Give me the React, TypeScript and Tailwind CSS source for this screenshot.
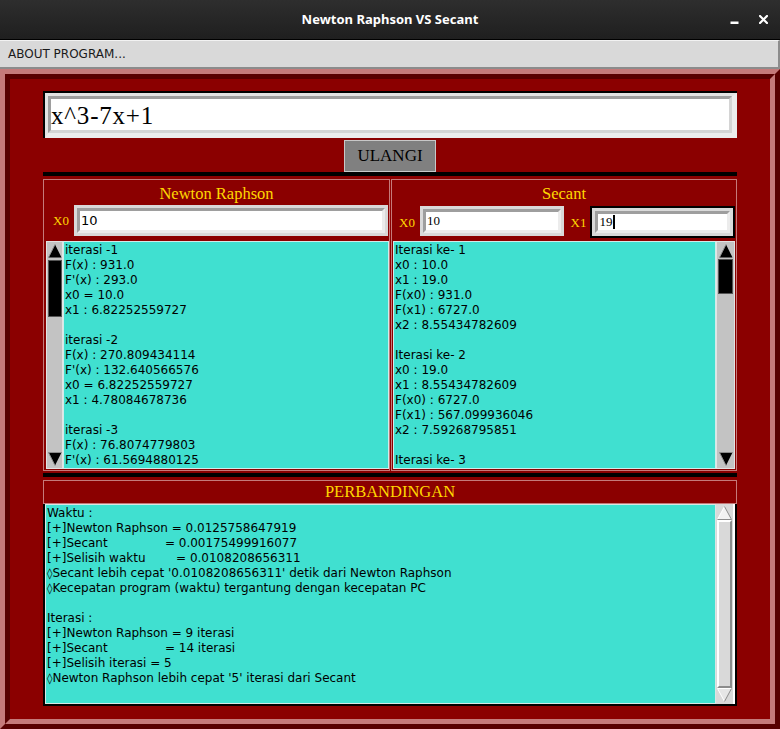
import type { ReactNode } from 'react'

const nrLines = [
  'iterasi -1',
  'F(x) : 931.0',
  "F'(x) : 293.0",
  'x0 = 10.0',
  'x1 : 6.82252559727',
  '',
  'iterasi -2',
  'F(x) : 270.809434114',
  "F'(x) : 132.640566576",
  'x0 = 6.82252559727',
  'x1 : 4.78084678736',
  '',
  'iterasi -3',
  'F(x) : 76.8074779803',
  "F'(x) : 61.5694880125",
]

const secLines = [
  'Iterasi ke- 1',
  'x0 : 10.0',
  'x1 : 19.0',
  'F(x0) : 931.0',
  'F(x1) : 6727.0',
  'x2 : 8.55434782609',
  '',
  'Iterasi ke- 2',
  'x0 : 19.0',
  'x1 : 8.55434782609',
  'F(x0) : 6727.0',
  'F(x1) : 567.099936046',
  'x2 : 7.59268795851',
  '',
  'Iterasi ke- 3',
]

const secPad = ' '.repeat(15)
const waktuPad = ' '.repeat(8)

const cmpLines = [
  'Waktu :',
  '[+]Newton Raphson = 0.0125758647919',
  `[+]Secant${secPad}= 0.00175499916077`,
  `[+]Selisih waktu${waktuPad}= 0.0108208656311`,
  "◊Secant lebih cepat '0.0108208656311' detik dari Newton Raphson",
  '◊Kecepatan program (waktu) tergantung dengan kecepatan PC',
  '',
  'Iterasi :',
  '[+]Newton Raphson = 9 iterasi',
  `[+]Secant${secPad}= 14 iterasi`,
  '[+]Selisih iterasi = 5',
  "◊Newton Raphson lebih cepat '5' iterasi dari Secant",
]

function Lines({ lines }: { lines: string[] }) {
  return (
    <>
      {lines.map((l, i) => (
        <div key={i} className="h-[15px] whitespace-pre leading-[15px]">
          {l.startsWith('◊') ? (
            <>
              <span className="text-[11px]">◊</span>
              {l.slice(1)}
            </>
          ) : (
            l
          )}
        </div>
      ))}
    </>
  )
}

function DarkArrow({ down }: { down?: boolean }) {
  if (down) {
    return (
      <svg width="14" height="14" viewBox="0 0 14 14">
        <polygon points="0.5,0.5 13.5,0.5 7,13.5" fill="#000" />
        <polyline points="7,13.5 0.5,0.5 13.5,0.5" stroke="#8c8c8c" fill="none" />
      </svg>
    )
  }
  return (
    <svg width="14" height="14" viewBox="0 0 14 14">
      <polygon points="7,0.5 13.5,13.5 0.5,13.5" fill="#000" />
      <polyline points="0.5,13.5 7,0.5" stroke="#8c8c8c" fill="none" />
    </svg>
  )
}

function LightArrow({ down }: { down?: boolean }) {
  if (down) {
    return (
      <svg width="15" height="14" viewBox="0 0 15 14">
        <polygon points="0.5,0.5 14.5,0.5 7.5,13.5" fill="#e6e6e6" />
        <polyline points="7.5,13.5 0.5,0.5 14.5,0.5" stroke="#ffffff" fill="none" />
        <polyline points="14.5,0.5 7.5,13.5" stroke="#8c8c8c" fill="none" />
      </svg>
    )
  }
  return (
    <svg width="15" height="14" viewBox="0 0 15 14">
      <polygon points="7.5,0.5 14.5,13.5 0.5,13.5" fill="#f2f2f2" />
      <polyline points="0.5,13.5 7.5,0.5" stroke="#ffffff" fill="none" />
      <polyline points="7.5,0.5 14.5,13.5 0.5,13.5" stroke="#8c8c8c" fill="none" />
    </svg>
  )
}

function DarkScroll({ className, thumb }: { className: string; thumb: string }) {
  return (
    <div className={`flex shrink-0 flex-col items-center border border-[#e3e3e3] bg-[#c3c3c3] py-[2px] ${className}`}>
      <DarkArrow />
      <div className={`w-[14px] border border-[#555] bg-black ${thumb}`} />
      <div className="flex-1" />
      <DarkArrow down />
    </div>
  )
}

function Entry({ children, focused, className }: { children: ReactNode; focused?: boolean; className: string }) {
  return (
    <div className={`${focused ? 'border-2 border-black' : ''} ${className}`}>
      <div className="h-full border-[3px] border-[#d9d9d9]">
        <div className="flex h-full items-center border-[3px] border-t-[#9e9e9e] border-l-[#9e9e9e] border-r-[#ececec] border-b-[#ececec] bg-white pl-[1px] text-black">
          {children}
        </div>
      </div>
    </div>
  )
}

function Label({ children }: { children: ReactNode }) {
  return <span className="self-center font-['Liberation_Serif',serif] text-[13px] text-[#ffd700]">{children}</span>
}

function TitleBar() {
  return (
    <div className="relative flex h-[40px] shrink-0 items-center justify-center border-b border-black bg-gradient-to-b from-[#2e2e2e] to-[#1f1f1f]">
      <span className="font-['Noto_Sans',sans-serif] text-[13px] font-bold text-white">Newton Raphson VS Secant</span>
      <div className="absolute right-[12px] top-[15px] flex items-end gap-[20px]">
        <svg width="9" height="9" viewBox="0 0 9 9">
          <rect x="0.5" y="6.5" width="8" height="2.5" fill="#fff" />
        </svg>
        <svg width="9" height="9" viewBox="0 0 9 9">
          <path d="M1 1 L8 8 M8 1 L1 8" stroke="#fff" strokeWidth="2.2" strokeLinecap="square" />
        </svg>
      </div>
    </div>
  )
}

export default function App() {
  return (
    <div className="flex h-[729px] w-[780px] flex-col overflow-hidden bg-[#8b0000] font-['DejaVu_Sans',sans-serif]">
      <TitleBar />

      {/* menu */}
      <div className="flex h-[29px] shrink-0 items-center border-t border-b-2 border-r-2 border-t-[#f2f2f2] border-b-[#8c8c8c] border-r-[#8c8c8c] bg-[#d9d9d9] pl-[8px] text-[12px] text-[#1a1a1a]">
        ABOUT PROGRAM...
      </div>

      {/* ridge frame */}
      <div className="flex min-h-0 flex-1 flex-col border-[5px] border-t-[#c57a7a] border-l-[#c57a7a] border-r-[#580000] border-b-[#580000]">
        <div className="flex min-h-0 flex-1 flex-col border-[5px] border-t-[#580000] border-l-[#580000] border-r-[#c57a7a] border-b-[#c57a7a] bg-[#8b0000] px-[33px] pt-[12px]">
          {/* equation */}
          <div className="h-[47px] shrink-0 border-t-2 border-l-2 border-black">
            <div className="h-full border-t-[3px] border-l-[3px] border-r-[5px] border-b-[5px] border-t-[#e3e3e3] border-l-[#e3e3e3] border-r-[#ececec] border-b-[#ececec]">
              <div className="flex h-full items-center border-[3px] border-t-[#9e9e9e] border-l-[#9e9e9e] border-r-[#d4d4d4] border-b-[#d4d4d4] bg-white pt-[2px] font-['Liberation_Serif',serif] text-[25px] tracking-[0.8px] text-black">
                x^3-7x+1
              </div>
            </div>
          </div>

          <div className="mt-[2px] flex h-[32px] shrink-0 justify-center">
            <button className="flex w-[92px] items-center justify-center border border-[#c8c8c8] bg-[#808080] font-['Liberation_Serif',serif] text-[17px] text-black">
              ULANGI
            </button>
          </div>

          <div className="h-[4px] shrink-0 bg-black" />

          {/* panels */}
          <div className="mt-[3px] flex h-[292px] shrink-0 gap-[1px]">
            {/* Newton Raphson */}
            <div className="flex w-[347px] flex-col border border-[#c57a7a]">
              <div className="flex h-[25px] items-center justify-center pt-[3px] font-['Liberation_Serif',serif] text-[16.5px] text-[#ffd700]">
                Newton Raphson
              </div>
              <div className="mb-[4px] flex h-[31px] gap-[5px] pl-[9px] pr-[1px]">
                <Label>X0</Label>
                <Entry className="h-[31px] flex-1">
                  <span className="text-[13px]">10</span>
                </Entry>
              </div>
              <div className="flex min-h-0 flex-1 py-[1px] pl-[2px]">
                <DarkScroll className="w-[17px]" thumb="mt-[2px] h-[57px]" />
                <div className="flex-1 overflow-hidden border border-[#d0ecea] bg-[#40e0d0] pl-[1px] pt-[1px] text-[12px] text-black">
                  <Lines lines={nrLines} />
                </div>
              </div>
            </div>

            {/* Secant */}
            <div className="flex w-[346px] flex-col border border-[#c57a7a]">
              <div className="flex h-[25px] items-center justify-center pt-[3px] font-['Liberation_Serif',serif] text-[16.5px] text-[#ffd700]">
                Secant
              </div>
              <div className="mb-[1px] mt-[1px] flex h-[33px] items-start pl-[7px] pr-[1px]">
                <Label>X0</Label>
                <Entry className="ml-[5px] h-[30px] w-[144px]">
                  <span className="font-['Liberation_Serif',serif] text-[13px]">10</span>
                </Entry>
                <span className="ml-[7px] self-center font-['Liberation_Serif',serif] text-[13px] text-[#ffd700]">X1</span>
                <Entry focused className="ml-[4px] h-[32px] w-[145px]">
                  <span className="font-['Liberation_Serif',serif] text-[13px]">19</span>
                  <span className="ml-[1px] h-[14px] w-[2px] bg-black" />
                </Entry>
              </div>
              <div className="flex min-h-0 flex-1 py-[1px] pl-[1px] pr-[1px]">
                <div className="flex-1 overflow-hidden border border-[#d0ecea] bg-[#40e0d0] pl-[1px] pt-[1px] text-[12px] text-black">
                  <Lines lines={secLines} />
                </div>
                <DarkScroll className="w-[19px]" thumb="mt-[1px] h-[35px] w-[15px]" />
              </div>
            </div>
          </div>

          <div className="mt-[2px] h-[4px] shrink-0 bg-black" />

          {/* comparison */}
          <div className="mt-[3px] flex h-[226px] shrink-0 flex-col">
            <div className="flex h-[24px] items-center justify-center border border-[#c57a7a] font-['Liberation_Serif',serif] text-[16.5px] text-[#ffd700]">
              PERBANDINGAN
            </div>
            <div className="flex min-h-0 flex-1 border-x-2 border-b-2 border-black">
              <div className="flex-1 overflow-hidden border border-[#d9e6e4] bg-[#40e0d0] pl-[1px] pt-[1px] text-[12px] text-black">
                <Lines lines={cmpLines} />
              </div>
              <div className="flex w-[19px] shrink-0 flex-col items-center border-r-2 border-r-white bg-[#d9d9d9] py-[2px]">
                <LightArrow />
                <div className="w-[15px] flex-1 border-2 border-t-white border-l-white border-r-[#8c8c8c] border-b-[#8c8c8c] bg-[#d9d9d9]" />
                <LightArrow down />
              </div>
            </div>
          </div>
        </div>
      </div>
    </div>
  )
}
